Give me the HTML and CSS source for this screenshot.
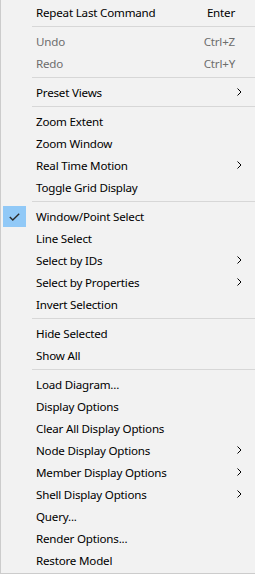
FILE: index.html
```html
<!DOCTYPE html>
<html>
<head>
<meta charset="utf-8">
<link rel="stylesheet" href="styles.css">
</head>
<body>
<div class="menu">
  <div class="item"><span class="label">Repeat Last Command</span><span class="key">Enter</span></div>
  <div class="sep"></div>
  <div class="item disabled"><span class="label">Undo</span><span class="key">Ctrl+Z</span></div>
  <div class="item disabled"><span class="label">Redo</span><span class="key">Ctrl+Y</span></div>
  <div class="sep"></div>
  <div class="item"><span class="label">Preset Views</span><svg class="arrow" viewBox="0 0 5 8"><path d="M0.5 0.5 L4 4 L0.5 7.5" fill="none" stroke="#000" stroke-width="1"/></svg></div>
  <div class="sep"></div>
  <div class="item"><span class="label">Zoom Extent</span></div>
  <div class="item"><span class="label">Zoom Window</span></div>
  <div class="item"><span class="label">Real Time Motion</span><svg class="arrow" viewBox="0 0 5 8"><path d="M0.5 0.5 L4 4 L0.5 7.5" fill="none" stroke="#000" stroke-width="1"/></svg></div>
  <div class="item"><span class="label">Toggle Grid Display</span></div>
  <div class="sep"></div>
  <div class="item"><span class="check"><svg viewBox="0 0 11 8"><path d="M0.8 4 L3.8 7 L10.2 0.8" fill="none" stroke="#2b2b2b" stroke-width="1.4"/></svg></span><span class="label">Window/Point Select</span></div>
  <div class="item"><span class="label">Line Select</span></div>
  <div class="item"><span class="label">Select by IDs</span><svg class="arrow" viewBox="0 0 5 8"><path d="M0.5 0.5 L4 4 L0.5 7.5" fill="none" stroke="#000" stroke-width="1"/></svg></div>
  <div class="item"><span class="label">Select by Properties</span><svg class="arrow" viewBox="0 0 5 8"><path d="M0.5 0.5 L4 4 L0.5 7.5" fill="none" stroke="#000" stroke-width="1"/></svg></div>
  <div class="item"><span class="label">Invert Selection</span></div>
  <div class="sep"></div>
  <div class="item"><span class="label">Hide Selected</span></div>
  <div class="item"><span class="label">Show All</span></div>
  <div class="sep"></div>
  <div class="item"><span class="label">Load Diagram...</span></div>
  <div class="item"><span class="label">Display Options</span></div>
  <div class="item"><span class="label">Clear All Display Options</span></div>
  <div class="item"><span class="label">Node Display Options</span><svg class="arrow" viewBox="0 0 5 8"><path d="M0.5 0.5 L4 4 L0.5 7.5" fill="none" stroke="#000" stroke-width="1"/></svg></div>
  <div class="item"><span class="label">Member Display Options</span><svg class="arrow" viewBox="0 0 5 8"><path d="M0.5 0.5 L4 4 L0.5 7.5" fill="none" stroke="#000" stroke-width="1"/></svg></div>
  <div class="item"><span class="label">Shell Display Options</span><svg class="arrow" viewBox="0 0 5 8"><path d="M0.5 0.5 L4 4 L0.5 7.5" fill="none" stroke="#000" stroke-width="1"/></svg></div>
  <div class="item"><span class="label">Query...</span></div>
  <div class="item"><span class="label">Render Options...</span></div>
  <div class="item"><span class="label">Restore Model</span></div>
</div>
</body>
</html>
```
FILE: styles.css
```css
html, body {
  margin: 0;
  padding: 0;
  background: #f2f2f2;
}
.menu {
  width: 255px;
  height: 574px;
  box-sizing: border-box;
  background: #f2f2f2;
  border-left: 1px solid #cccccc;
  border-bottom: 1px solid #cccccc;
  padding: 1px 0 2px 0;
  font-family: "Noto Sans", "Open Sans", sans-serif;
  font-size: 11.6px;
  letter-spacing: -0.2px;
  color: #000;
  display: flex;
  flex-direction: column;
}
.item {
  height: 22px;
  display: flex;
  align-items: center;
  position: relative;
  padding-left: 35px;
  padding-right: 12px;
  white-space: nowrap;
}
.label {
  flex: 1;
}
.key {
  padding-right: 8px;
}
.disabled {
  color: #6d6d6d;
}
.arrow {
  width: 5px;
  height: 8px;
  margin-right: 1px;
}
.sep {
  height: 7px;
  display: flex;
  align-items: center;
  padding-left: 31px;
}
.sep::after {
  content: "";
  flex: 1;
  height: 1px;
  background: #d7d7d7;
}
.check {
  position: absolute;
  left: 2px;
  top: 1px;
  width: 23px;
  height: 21px;
  background: #91c9f7;
  display: flex;
  align-items: center;
  justify-content: center;
}
.check svg {
  width: 11px;
  height: 8px;
}
```
